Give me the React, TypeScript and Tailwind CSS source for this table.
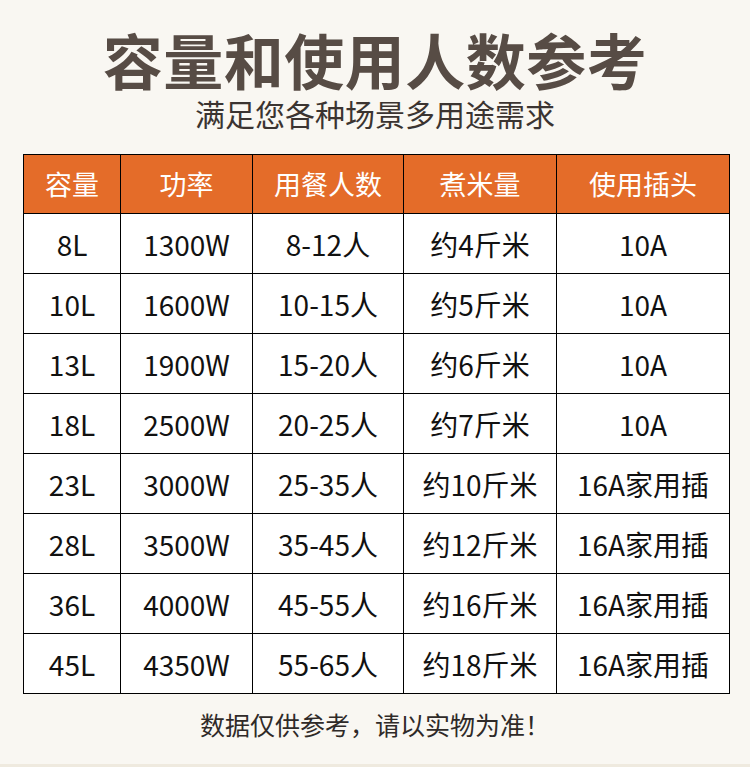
import React from "react";

const rows: string[][] = [
  ["8L", "1300W", "8-12人", "约4斤米", "10A"],
  ["10L", "1600W", "10-15人", "约5斤米", "10A"],
  ["13L", "1900W", "15-20人", "约6斤米", "10A"],
  ["18L", "2500W", "20-25人", "约7斤米", "10A"],
  ["23L", "3000W", "25-35人", "约10斤米", "16A家用插"],
  ["28L", "3500W", "35-45人", "约12斤米", "16A家用插"],
  ["36L", "4000W", "45-55人", "约16斤米", "16A家用插"],
  ["45L", "4350W", "55-65人", "约18斤米", "16A家用插"],
];

const headers = ["容量", "功率", "用餐人数", "煮米量", "使用插头"];
const widths = ["w-[97px]", "w-[132px]", "w-[151px]", "w-[153px]", "w-[173px]"];

export default function App() {
  return (
    <div
      className="w-[750px] h-[767px] bg-[#f9f7f2] flex flex-col items-center border-b-[3px] border-[#efeadf]"
      style={{ fontFamily: '"Noto Sans CJK SC", "Noto Sans", sans-serif' }}
    >
      <h1 className="mt-[29px] text-[60px] leading-[60px] font-bold text-[#574c45] tracking-[0.5px]">
        容量和使用人数参考
      </h1>
      <p className="mt-[6px] text-[30px] leading-[36px] text-[#3b3431]">满足您各种场景多用途需求</p>
      <table className="mt-[23px] border-collapse table-fixed self-start ml-[23px]">
        <thead>
          <tr className="bg-[#e46c29] h-[59px]">
            {headers.map((h, i) => (
              <th
                key={h}
                className={`${widths[i]} border-[1.5px] border-black text-white text-[27px] font-normal text-center p-0`}
              >
                {h}
              </th>
            ))}
          </tr>
        </thead>
        <tbody>
          {rows.map((r, ri) => (
            <tr key={ri} className="bg-white h-[60px]">
              {r.map((c, ci) => (
                <td
                  key={ci}
                  className="border-[1.5px] border-black text-[28px] text-[#111111] text-center p-0"
                >
                  {c}
                </td>
              ))}
            </tr>
          ))}
        </tbody>
      </table>
      <p className="mt-[11px] text-[25px] leading-[38px] text-[#2f2a28]">数据仅供参考，请以实物为准！</p>
    </div>
  );
}
